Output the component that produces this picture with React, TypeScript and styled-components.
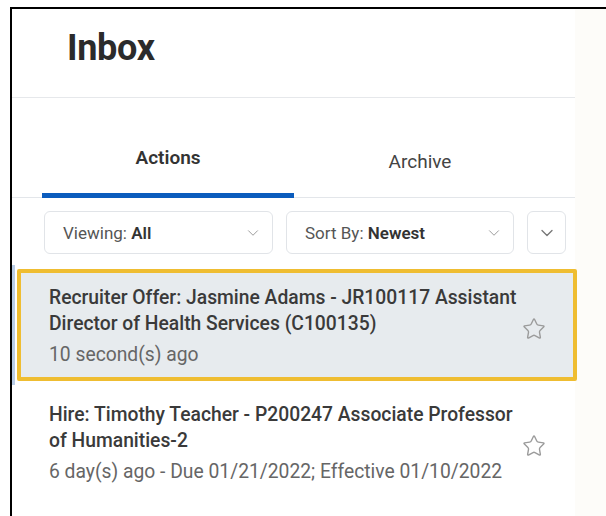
import React from "react";
import styled, { createGlobalStyle } from "styled-components";
import { ChevronDown, Star } from "lucide-react";

const GlobalStyle = createGlobalStyle`
  html, body {
    margin: 0;
    padding: 0;
    background: #ffffff;
  }
  body {
    font-family: Roboto, "Liberation Sans", Arial, sans-serif;
    color: #333333;
    -webkit-font-smoothing: antialiased;
  }
`;

const Page = styled.div`
  padding: 7px 0 0 10px;
  height: 516px;
  box-sizing: border-box;
  overflow: hidden;
`;

const Frame = styled.div`
  display: flex;
  height: 100%;
  border-top: 2px solid #000;
  border-left: 2px solid #000;
`;

const Panel = styled.div`
  width: 563px;
  flex-shrink: 0;
  background: #ffffff;
`;

const Side = styled.div`
  flex: 1;
  background: #fdfcf9;
`;

const Header = styled.div`
  height: 88px;
  padding-left: 55px;
  display: flex;
  align-items: center;
  border-bottom: 1px solid #e6e8eb;
`;

const Title = styled.h1`
  margin: 0 0 10px;
  font-size: 36px;
  font-weight: 700;
  color: #2b2b2b;
  letter-spacing: -0.3px;
`;

const TabBar = styled.div`
  display: flex;
  padding-left: 30px;
  height: 99px;
  border-bottom: 1px solid #e3e6ea;
`;

const Tab = styled.div<{ $active?: boolean }>`
  width: 252px;
  display: flex;
  justify-content: center;
  align-items: center;
  padding-top: ${(p) => (p.$active ? "24px" : "32px")};
  box-sizing: border-box;
  font-size: 19px;
  font-weight: ${(p) => (p.$active ? 600 : 400)};
  color: ${(p) => (p.$active ? "#333" : "#444")};
  border-bottom: 5px solid ${(p) => (p.$active ? "#0b5cbd" : "transparent")};
  margin-bottom: -1px;
`;

const Filters = styled.div`
  display: flex;
  gap: 13px;
  padding: 13px 0 0 32px;
`;

const Select = styled.div<{ $width: number }>`
  width: ${(p) => p.$width}px;
  height: 43px;
  box-sizing: border-box;
  border: 1px solid #e1e4e8;
  border-radius: 6px;
  display: flex;
  align-items: center;
  justify-content: space-between;
  padding: 0 10px 0 18px;
  font-size: 17px;
  color: #555;

  b {
    font-weight: 600;
    color: #333;
  }
`;

const IconSelect = styled(Select)`
  justify-content: center;
  padding: 0;
`;

const List = styled.div`
  padding-top: 11px;
`;

/* the highlighted row sits over the panel edge */
const Selected = styled.div`
  position: relative;
  z-index: 1;
  box-sizing: border-box;
  width: 565px;
  border-left: 3px solid #b9cde6;
  padding: 4px 0 4px 2px;
`;

const Card = styled.div`
  display: flex;
  align-items: center;
  border: 4px solid #efbd31;
  border-radius: 2px;
  background: #e7ebee;
  padding: 12px 0 9px 28px;
`;

const Plain = styled.div`
  display: flex;
  align-items: center;
  padding: 17px 0 10px 37px;
  width: 561px;
  box-sizing: border-box;
`;

const Text = styled.div`
  flex: 1;
  min-width: 0;
`;

const ItemTitle = styled.div`
  font-size: 19.3px;
  line-height: 26px;
  font-weight: 500;
  color: #3a3a3a;
`;

const ItemMeta = styled.div`
  margin-top: 5px;
  font-size: 19.3px;
  line-height: 26px;
  color: #666;
`;

const StarBox = styled.div`
  width: 24px;
  margin: 4px 27px 0 -8px;
  display: flex;
  color: #9b9b9b;
`;

const Item = ({ title, meta }: { title: string; meta: string }) => (
  <>
    <Text>
      <ItemTitle>{title}</ItemTitle>
      <ItemMeta>{meta}</ItemMeta>
    </Text>
    <StarBox>
      <Star size={24} strokeWidth={1.4} />
    </StarBox>
  </>
);

export default function App() {
  return (
    <>
      <GlobalStyle />
      <Page>
        <Frame>
          <Panel>
            <Header>
              <Title>Inbox</Title>
            </Header>
            <TabBar>
              <Tab $active>Actions</Tab>
              <Tab>Archive</Tab>
            </TabBar>
            <Filters>
              <Select $width={229}>
                <span>
                  Viewing: <b>All</b>
                </span>
                <ChevronDown size={18} strokeWidth={1.3} color="#999" />
              </Select>
              <Select $width={228}>
                <span>
                  Sort By: <b>Newest</b>
                </span>
                <ChevronDown size={18} strokeWidth={1.3} color="#999" />
              </Select>
              <IconSelect $width={39}>
                <ChevronDown size={20} strokeWidth={1.6} color="#777" />
              </IconSelect>
            </Filters>
            <List>
              <Selected>
                <Card>
                  <Item
                    title="Recruiter Offer: Jasmine Adams - JR100117 Assistant Director of Health Services (C100135)"
                    meta="10 second(s) ago"
                  />
                </Card>
              </Selected>
              <Plain>
                <Item
                  title="Hire: Timothy Teacher - P200247 Associate Professor of Humanities-2"
                  meta="6 day(s) ago - Due 01/21/2022; Effective 01/10/2022"
                />
              </Plain>
            </List>
          </Panel>
          <Side />
        </Frame>
      </Page>
    </>
  );
}
